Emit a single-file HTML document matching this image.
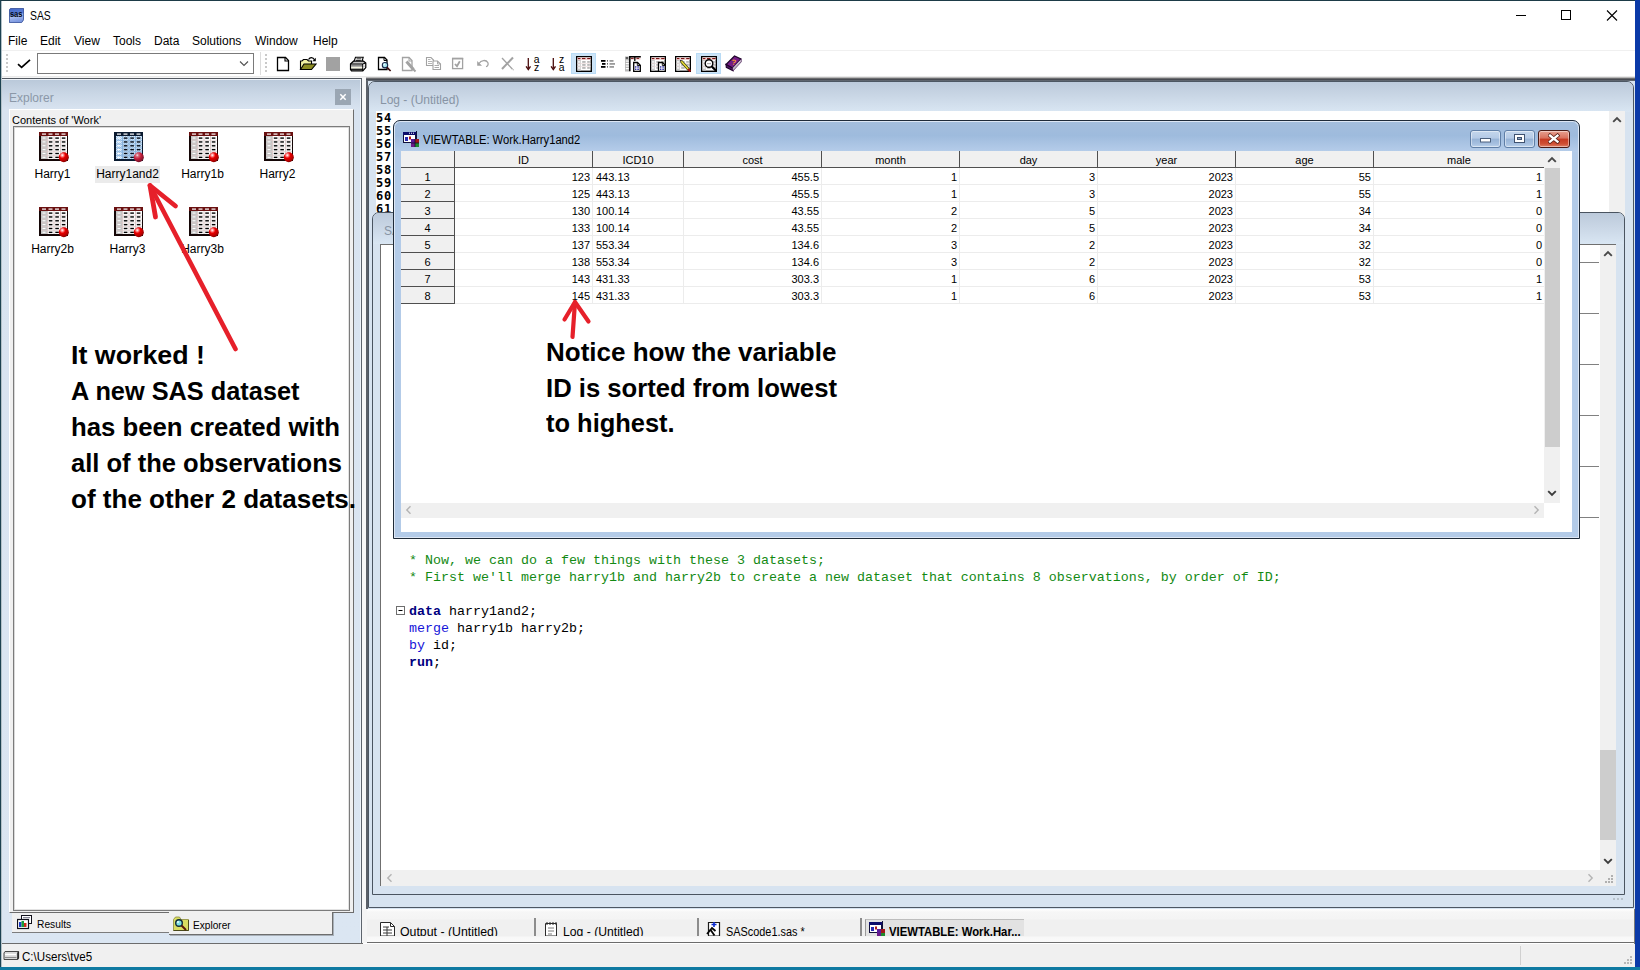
<!DOCTYPE html>
<html lang="en">
<head>
<meta charset="utf-8">
<title>SAS</title>
<style>
*{box-sizing:border-box;margin:0;padding:0}
html,body{width:1640px;height:970px;overflow:hidden;background:#fff}
body{position:relative;font-family:"Liberation Sans",sans-serif;font-size:12px;color:#000}
.abs{position:absolute}
.t{position:absolute;white-space:nowrap;line-height:14px}
/* outer frame */
#bTop{left:0;top:0;width:1640px;height:1px;background:#1d3b47}
#bLeft{left:0;top:0;width:1px;height:970px;background:#1d4251}
#bLeft2{left:1px;top:1px;width:1px;height:966px;background:#b4c2c9}
#bRight{left:1635px;top:0;width:5px;height:970px;background:#0b3aa8}
#bRightEdge{left:1634px;top:909px;width:1px;height:35px;background:#7a7a7a}
#bBottom{left:0;top:967px;width:1640px;height:3px;background:#0f7aa2}
/* title bar */
#title{left:1px;top:1px;width:1634px;height:30px;background:#fff}
/* menubar */
#menu{left:1px;top:31px;width:1634px;height:19px;background:#fff}
#menu .t{top:3px;font-size:12px}
/* toolbar */
#tb{left:1px;top:50px;width:1634px;height:27px;background:#fff;border-top:1px solid #f0f0f0}
#tbline{left:1px;top:76px;width:1634px;height:3px;background:linear-gradient(#e3e3e3,#f3f3f3 40%,#fafafa)}
#combo{left:37px;top:53px;width:217px;height:21px;border:1px solid #7a7a7a;background:#fff}
.grip{position:absolute;width:2px;top:54px;height:20px;background:repeating-linear-gradient(#c9c9c9 0 2px,transparent 2px 4px)}
/* explorer */
#exp{left:2px;top:78px;width:360px;height:865px;background:linear-gradient(#b9c8d9 0,#c9d6e5 14px,#d8e3f0 30px,#dbe6f2 100%);border-top:1px solid #535961;border-right:1px solid #5d646d;box-shadow:inset 0 1px 0 #eef3f9,inset -1px 0 0 #eef3f9}
#expHdr{left:9px;top:91px;font-size:12px;color:#8b98a8}
#expX{left:335px;top:89px;width:16px;height:16px;background:#9aa6b3}
#expPane{left:9px;top:109px;width:345px;height:804px;background:#f0f0f0;border-top:1px solid #fff;border-left:1px solid #fff;border-right:1px solid #6d6d6d;border-bottom:1px solid #6d6d6d}
#expList{left:13px;top:126px;width:337px;height:785px;background:#fff;border:1px solid #7b7b7b;box-shadow:inset 1px 1px 0 #d9d9d9,inset -1px -1px 0 #e3e3e3}
.ico{position:absolute;width:30px;height:30px}
.lbl{position:absolute;font-size:12px;line-height:14px;white-space:nowrap;text-align:center;width:90px}
.ann{position:absolute;white-space:nowrap;font-weight:bold;font-size:25.5px;line-height:30px;color:#000;transform-origin:0 0}
/* splitter + mdi */
#split{left:362px;top:78px;width:5px;height:865px;background:#f8f8f8}
#mdi{left:366px;top:78px;width:1269px;height:831px;background:#d7e3f0;border-left:2px solid #5c6169}
#mdiTop{left:366px;top:77px;width:1269px;height:4px;background:linear-gradient(#d8d8d8 0,#9a9a9a 25%,#3e4046 50%,#50555d 75%,#6d747e 100%)}
.cm{color:#138a13}.kw{color:#000080;font-weight:bold}.bl{color:#1414d8}
</style>
</head>
<body>
<!-- ===== title bar ===== -->
<div id="title" class="abs"></div>
<svg class="abs" style="left:9px;top:8px" width="15" height="15" viewBox="0 0 15 15">
  <defs><linearGradient id="sasg" x1="0" y1="0" x2="0.25" y2="1"><stop offset="0" stop-color="#4166c8"/><stop offset="0.5" stop-color="#5b7fd6"/><stop offset="0.62" stop-color="#a9bdee"/><stop offset="1" stop-color="#7c98e0"/></linearGradient></defs>
  <path d="M1.500 0.400H14.600V11.800L12.600 14.600H0.400V1.800Z" fill="url(#sasg)" stroke="#23408f" stroke-width="0.800"/>
  <text x="7.200" y="8.800" font-family="Liberation Sans,sans-serif" font-weight="bold" font-size="8.500" text-anchor="middle" fill="#03060f" textLength="12.600" lengthAdjust="spacingAndGlyphs">sas</text>
</svg>
<div class="t" style="left:30px;top:9px;font-size:12.5px;transform:scaleX(.83);transform-origin:0 0">SAS</div>
<svg class="abs" style="left:1500px;top:1px" width="135" height="30" viewBox="0 0 135 30" fill="none" stroke="#000" stroke-width="1">
  <path d="M16 14.5H26"/>
  <rect x="61.5" y="9.500" width="9" height="9"/>
  <path d="M107 9.500L117 19.500M117 9.500L107 19.500" stroke-width="1.1"/>
</svg>

<!-- ===== menu bar ===== -->
<div id="menu" class="abs">
  <div class="t" style="left:7px">File</div>
  <div class="t" style="left:39px">Edit</div>
  <div class="t" style="left:73px">View</div>
  <div class="t" style="left:112px">Tools</div>
  <div class="t" style="left:153px">Data</div>
  <div class="t" style="left:191px">Solutions</div>
  <div class="t" style="left:254px">Window</div>
  <div class="t" style="left:312px">Help</div>
</div>

<!-- ===== toolbar ===== -->
<div id="tb" class="abs"></div>
<div id="tbline" class="abs"></div>
<div class="grip" style="left:6px"></div>
<div class="grip" style="left:265px"></div>
<div class="abs" style="left:260px;top:52px;width:1px;height:23px;background:#dcdcdc"></div>
<svg class="abs" style="left:17px;top:58px" width="14" height="11" viewBox="0 0 14 11"><path d="M1 6.200L4.600 9.300L13 1.800" fill="none" stroke="#000" stroke-width="1.700"/></svg>
<div id="combo" class="abs"></div>
<svg class="abs" style="left:239px;top:60px" width="10" height="7" viewBox="0 0 10 7"><path d="M1 1.500L5 5.500L9 1.500" fill="none" stroke="#505050" stroke-width="1.100"/></svg>
<svg class="abs" style="left:276px;top:56px" width="14" height="16" viewBox="0 0 14 16"><path d="M1.500 1.500H9.500L12.500 4.500V14.500H1.500Z" fill="#fff" stroke="#000" stroke-width="1.300"/><path d="M9 1.500V5H12.500" fill="none" stroke="#000" stroke-width="1.100"/></svg>
<svg class="abs" style="left:299px;top:56px" width="18" height="16" viewBox="0 0 18 16"><path d="M9.500 3.500C11 1 14 1 15.500 3.800" fill="none" stroke="#000" stroke-width="1.200"/><path d="M16.800 1.800V5.200H13.400Z" fill="#000"/><path d="M1.500 13.500V5H3L4.500 3.500H8L9.500 5H12.500V8" fill="#f3f3a4" stroke="#000" stroke-width="1.100"/><path d="M1.500 13.500L5 8H17L12.500 13.500Z" fill="#8c8c22" stroke="#000" stroke-width="1.100"/></svg>
<svg class="abs" style="left:326px;top:57px" width="14" height="14" viewBox="0 0 14 14"><rect x="0" y="0" width="14" height="14" fill="#a2a2a2"/></svg>
<svg class="abs" style="left:349px;top:56px" width="18" height="16" viewBox="0 0 18 16"><path d="M5 5.500L6.500 1.300H14.200L13 5.500" fill="#fff" stroke="#000" stroke-width="1.100"/><path d="M7.500 2.800H12.300M7 4.400H11.800" stroke="#000" stroke-width="0.800"/><path d="M1.500 8L4.500 5.200H14.500L16.800 7V11.500L13.800 14.800H2.500L1.500 13.500Z" fill="#c8c8c8" stroke="#000" stroke-width="1.200"/><path d="M1.500 8H13.600L16.800 7M13.600 8V14.800" fill="none" stroke="#000" stroke-width="1"/><rect x="2.200" y="9" width="11" height="1.600" fill="#8a8a8a"/><rect x="2.200" y="10.800" width="11" height="1.700" fill="#f4f4e0"/><path d="M2 13.300H13.500" stroke="#000" stroke-width="1.100"/><circle cx="15.200" cy="9" r="0.700" fill="#fff"/><circle cx="15.200" cy="11.500" r="0.700" fill="#fff"/></svg>
<svg class="abs" style="left:377px;top:56px" width="16" height="17" viewBox="0 0 16 17"><path d="M1.500 1.500H7.500L10 4V13.500H1.500Z" fill="#fff" stroke="#000" stroke-width="1.300"/><path d="M7 1.500V4.500H10" fill="none" stroke="#000"/><circle cx="8" cy="9.200" r="2.700" fill="#a8e4ee" stroke="#1a2a4a" stroke-width="1.100"/><circle cx="7.300" cy="8.500" r="0.900" fill="#e8ffff"/><path d="M10 11.400L13.600 15" stroke="#3a0a0a" stroke-width="1.700"/></svg>
<svg class="abs" style="left:401px;top:56px" width="16" height="17" viewBox="0 0 16 17"><path d="M1.500 1.500H8L11 4.500V14.500H1.500Z" fill="#fff" stroke="#a2a2a2" stroke-width="1.300"/><path d="M8 1.500V5H11" fill="none" stroke="#a2a2a2"/><path d="M5.500 5.500L12.500 13.500" stroke="#a2a2a2" stroke-width="3"/><path d="M12 13L14.500 15.500" stroke="#a2a2a2" stroke-width="2"/></svg>
<svg class="abs" style="left:425px;top:56px" width="17" height="15" viewBox="0 0 17 15"><path d="M1.500 1.500H6L8.500 4V9.500H1.500Z" fill="#fff" stroke="#a2a2a2" stroke-width="1.100"/><path d="M3 3.500H5.500M3 5.500H7M3 7.500H7" stroke="#a2a2a2" stroke-width="0.800"/><path d="M8 5H12.500L15.500 8V13.500H8Z" fill="#fff" stroke="#a2a2a2" stroke-width="1.100"/><path d="M12.500 5V8H15.500" fill="none" stroke="#a2a2a2" stroke-width="0.900"/><path d="M9.500 9.500H14M9.500 11.500H14" stroke="#a2a2a2" stroke-width="0.900"/></svg>
<svg class="abs" style="left:451px;top:57px" width="13" height="13" viewBox="0 0 13 13"><rect x="1.600" y="1.600" width="10" height="10" fill="#fff" stroke="#a2a2a2" stroke-width="1.300"/><path d="M1 1.500H12.200" stroke="#a2a2a2" stroke-width="1.600"/><path d="M4 7L6 9.200L8.800 4.300" fill="none" stroke="#a2a2a2" stroke-width="1.800"/></svg>
<svg class="abs" style="left:476px;top:58px" width="14" height="10" viewBox="0 0 14 10"><path d="M3 5.500C5 2 10 1.500 11.800 4.500C12.800 6.500 11.500 8.300 10 8.600" fill="none" stroke="#a2a2a2" stroke-width="1.300"/><path d="M1.200 3V7.800H6Z" fill="#a2a2a2"/></svg>
<svg class="abs" style="left:500px;top:56px" width="15" height="15" viewBox="0 0 15 15"><path d="M2 2L12.500 13.200" stroke="#a2a2a2" stroke-width="1.300"/><path d="M13 1.500L2 13" stroke="#a2a2a2" stroke-width="2"/><rect x="12.800" y="13.300" width="1" height="1" fill="#a2a2a2"/></svg>
<svg class="abs" style="left:525px;top:56px" width="16" height="16" viewBox="0 0 16 16"><path d="M3.300 2V12.500" stroke="#4a0c0c" stroke-width="1.300"/><path d="M1.100 10.400L3.300 13.600L5.500 10.400" fill="none" stroke="#4a0c0c" stroke-width="1.400"/><text x="11.600" y="6.700" font-family="Liberation Sans,sans-serif" font-size="10.400" text-anchor="middle" fill="#000">a</text><text x="11.600" y="14.600" font-family="Liberation Sans,sans-serif" font-size="10.400" text-anchor="middle" fill="#000">z</text></svg>
<svg class="abs" style="left:550px;top:56px" width="16" height="16" viewBox="0 0 16 16"><path d="M3.300 2V12.500" stroke="#4a0c0c" stroke-width="1.300"/><path d="M1.100 10.400L3.300 13.600L5.500 10.400" fill="none" stroke="#4a0c0c" stroke-width="1.400"/><text x="11.600" y="6.700" font-family="Liberation Sans,sans-serif" font-size="10.400" text-anchor="middle" fill="#000">z</text><text x="11.600" y="14.600" font-family="Liberation Sans,sans-serif" font-size="10.400" text-anchor="middle" fill="#000">a</text></svg>
<div class="abs" style="left:571px;top:53px;width:25px;height:21px;background:#cce4f7;border:1px solid #b9dbf5"></div>
<svg class="abs" style="left:576px;top:56px" width="16" height="16" viewBox="0 0 16 16"><rect x="0.700" y="0.700" width="14.600" height="14.600" fill="#fff" stroke="#000" stroke-width="1.400"/><rect x="1.400" y="1.400" width="13.200" height="2.600" fill="#f2d6d6"/><rect x="1.400" y="4" width="3.400" height="10.600" fill="#c6c6c6"/><rect x="1.8" y="2" width="2.6" height="1.100" fill="#7a1414"/><rect x="6" y="2" width="3.4" height="1.100" fill="#7a1414"/><rect x="11.2" y="2" width="3.4" height="1.100" fill="#7a1414"/><rect x="2" y="5.3" width="2.200" height="1.300" fill="#fff"/><rect x="6.200" y="5.3" width="3.400" height="1.300" fill="#9a9a9a"/><rect x="11.200" y="5.3" width="2.600" height="1.300" fill="#9a9a9a"/><rect x="2" y="8.3" width="2.200" height="1.300" fill="#fff"/><rect x="6.200" y="8.3" width="3.400" height="1.300" fill="#9a9a9a"/><rect x="11.200" y="8.3" width="2.600" height="1.300" fill="#9a9a9a"/><rect x="2" y="11.3" width="2.200" height="1.300" fill="#fff"/><rect x="6.200" y="11.3" width="3.400" height="1.300" fill="#9a9a9a"/><rect x="11.200" y="11.3" width="2.600" height="1.300" fill="#9a9a9a"/><rect x="1.400" y="7.200" width="13.200" height="0.600" fill="#e8d8d8"/><rect x="1.400" y="10.200" width="13.200" height="0.600" fill="#e8d8d8"/></svg>
<svg class="abs" style="left:600px;top:59px" width="16" height="10" viewBox="0 0 16 10"><rect x="1" y="1" width="4.500" height="1.800" fill="#000"/><rect x="2" y="4" width="3.500" height="1.800" fill="#000"/><rect x="1" y="7" width="4.500" height="1.800" fill="#000"/><rect x="7" y="1.400" width="1" height="1" fill="#000"/><rect x="7" y="4.400" width="1" height="1" fill="#000"/><rect x="7" y="7.400" width="1" height="1" fill="#000"/><rect x="9.500" y="1" width="4" height="1.800" fill="#9a9a9a"/><rect x="9.500" y="4" width="5.500" height="1.800" fill="#9a9a9a"/><rect x="9.500" y="7" width="4.500" height="1.800" fill="#9a9a9a"/></svg>
<svg class="abs" style="left:625px;top:56px" width="17" height="16" viewBox="0 0 17 16"><rect x="0" y="0.500" width="4.500" height="15" fill="#b8b8b8"/><rect x="4.500" y="0.700" width="10.800" height="14.600" fill="#fff"/><rect x="4.500" y="0.500" width="11" height="3.200" fill="#f0d2d2"/><path d="M4.800 15.300V0.800H15.800" fill="none" stroke="#000" stroke-width="1.500"/><path d="M9.800 0.800V5" stroke="#000" stroke-width="1.300"/><rect x="0.800" y="1.500" width="2.200" height="1" fill="#000"/><rect x="6" y="1.900" width="2.600" height="1" fill="#7a1414"/><rect x="11.500" y="1.900" width="2.600" height="1" fill="#7a1414"/><rect x="0.800" y="4.5" width="3" height="1.200" fill="#fff"/><rect x="0.800" y="7" width="3" height="1.200" fill="#fff"/><rect x="0.800" y="9.5" width="3" height="1.200" fill="#fff"/><rect x="0.800" y="12" width="3" height="1.200" fill="#fff"/><path d="M8.700 6.500H12.500L15.300 9.300V15.300H8.700Z" fill="#fff" stroke="#000" stroke-width="1.300"/><path d="M12.300 6.500V9.500H15.300" fill="none" stroke="#000" stroke-width="0.900"/><rect x="10" y="10.300" width="1.400" height="1.300" fill="#1a1a9a"/><rect x="12.300" y="10.300" width="1.600" height="1.300" fill="#1a1a9a"/><rect x="10" y="12.600" width="1.400" height="1.300" fill="#1a1a9a"/><rect x="12.300" y="12.600" width="1.600" height="1.300" fill="#1a1a9a"/></svg>
<svg class="abs" style="left:650px;top:56px" width="17" height="16" viewBox="0 0 17 16"><rect x="0.700" y="0.700" width="14.600" height="14.600" fill="#fff" stroke="#000" stroke-width="1.400"/><rect x="1.400" y="1.400" width="13.200" height="2.600" fill="#f2d6d6"/><rect x="1.400" y="4" width="3.400" height="10.600" fill="#c6c6c6"/><rect x="1.8" y="2" width="2.6" height="1.100" fill="#7a1414"/><rect x="6" y="2" width="3.4" height="1.100" fill="#7a1414"/><rect x="11.2" y="2" width="3.4" height="1.100" fill="#7a1414"/><rect x="2" y="5.3" width="2.200" height="1.300" fill="#fff"/><rect x="6.200" y="5.3" width="3.400" height="1.300" fill="#9a9a9a"/><rect x="11.200" y="5.3" width="2.600" height="1.300" fill="#9a9a9a"/><rect x="2" y="8.3" width="2.200" height="1.300" fill="#fff"/><rect x="6.200" y="8.3" width="3.400" height="1.300" fill="#9a9a9a"/><rect x="11.200" y="8.3" width="2.600" height="1.300" fill="#9a9a9a"/><rect x="2" y="11.3" width="2.200" height="1.300" fill="#fff"/><rect x="6.200" y="11.3" width="3.400" height="1.300" fill="#9a9a9a"/><rect x="11.200" y="11.3" width="2.600" height="1.300" fill="#9a9a9a"/><rect x="1.400" y="7.200" width="13.200" height="0.600" fill="#e8d8d8"/><rect x="1.400" y="10.200" width="13.200" height="0.600" fill="#e8d8d8"/><path d="M8.500 6.500H12.500L15.300 9.300V15.300H8.500Z" fill="#fff" stroke="#000" stroke-width="1.300"/><path d="M12.300 6.500V9.500H15.300" fill="none" stroke="#000" stroke-width="0.900"/><rect x="10" y="10.300" width="1.400" height="1.300" fill="#1a1a9a"/><rect x="12.300" y="10.300" width="1.600" height="1.300" fill="#1a1a9a"/><rect x="10" y="12.600" width="1.400" height="1.300" fill="#1a1a9a"/><rect x="12.300" y="12.600" width="1.600" height="1.300" fill="#1a1a9a"/></svg>
<svg class="abs" style="left:675px;top:56px" width="17" height="16" viewBox="0 0 17 16"><rect x="0.700" y="0.700" width="14.600" height="14.600" fill="#fff" stroke="#000" stroke-width="1.400"/><rect x="1.400" y="1.400" width="13.200" height="2.600" fill="#f2d6d6"/><rect x="1.400" y="4" width="3.400" height="10.600" fill="#c6c6c6"/><rect x="1.8" y="2" width="2.6" height="1.100" fill="#7a1414"/><rect x="6" y="2" width="3.4" height="1.100" fill="#7a1414"/><rect x="11.2" y="2" width="3.4" height="1.100" fill="#7a1414"/><rect x="2" y="5.3" width="2.200" height="1.300" fill="#fff"/><rect x="6.200" y="5.3" width="3.400" height="1.300" fill="#9a9a9a"/><rect x="11.200" y="5.3" width="2.600" height="1.300" fill="#9a9a9a"/><rect x="2" y="8.3" width="2.200" height="1.300" fill="#fff"/><rect x="6.200" y="8.3" width="3.400" height="1.300" fill="#9a9a9a"/><rect x="11.200" y="8.3" width="2.600" height="1.300" fill="#9a9a9a"/><rect x="2" y="11.3" width="2.200" height="1.300" fill="#fff"/><rect x="6.200" y="11.3" width="3.400" height="1.300" fill="#9a9a9a"/><rect x="11.200" y="11.3" width="2.600" height="1.300" fill="#9a9a9a"/><rect x="1.400" y="7.200" width="13.200" height="0.600" fill="#e8d8d8"/><rect x="1.400" y="10.200" width="13.200" height="0.600" fill="#e8d8d8"/><path d="M6 5L14.500 14.500" stroke="#3a3a0a" stroke-width="2.800"/><path d="M6.300 5.300L13.600 13.500" stroke="#f0e43a" stroke-width="1.400"/><path d="M13 13L15.500 15.500" stroke="#a01414" stroke-width="2"/><path d="M4.800 3.800L6.800 4.600L5.600 5.800Z" fill="#000"/></svg>
<div class="abs" style="left:696px;top:53px;width:25px;height:21px;background:#cce4f7;border:1px solid #b9dbf5"></div>
<svg class="abs" style="left:701px;top:56px" width="17" height="16" viewBox="0 0 17 16"><rect x="0.700" y="0.700" width="14.600" height="14.600" fill="#fff" stroke="#000" stroke-width="1.400"/><rect x="1.400" y="1.400" width="13.200" height="2.600" fill="#f2d6d6"/><rect x="1.400" y="4" width="3.400" height="10.600" fill="#c6c6c6"/><rect x="1.8" y="2" width="2.6" height="1.100" fill="#7a1414"/><rect x="6" y="2" width="3.4" height="1.100" fill="#7a1414"/><rect x="11.2" y="2" width="3.4" height="1.100" fill="#7a1414"/><rect x="2" y="5.3" width="2.200" height="1.300" fill="#fff"/><rect x="6.200" y="5.3" width="3.400" height="1.300" fill="#9a9a9a"/><rect x="11.200" y="5.3" width="2.600" height="1.300" fill="#9a9a9a"/><rect x="2" y="8.3" width="2.200" height="1.300" fill="#fff"/><rect x="6.200" y="8.3" width="3.400" height="1.300" fill="#9a9a9a"/><rect x="11.200" y="8.3" width="2.600" height="1.300" fill="#9a9a9a"/><rect x="2" y="11.3" width="2.200" height="1.300" fill="#fff"/><rect x="6.200" y="11.3" width="3.400" height="1.300" fill="#9a9a9a"/><rect x="11.200" y="11.3" width="2.600" height="1.300" fill="#9a9a9a"/><rect x="1.400" y="7.200" width="13.200" height="0.600" fill="#e8d8d8"/><rect x="1.400" y="10.200" width="13.200" height="0.600" fill="#e8d8d8"/><circle cx="8" cy="7.500" r="3.800" fill="#fff" stroke="#000" stroke-width="1.400"/><rect x="6" y="7" width="4" height="1.200" fill="#b0b0b0"/><path d="M10.800 10.500L15.300 15" stroke="#000" stroke-width="2.200"/></svg>
<svg class="abs" style="left:725px;top:55px" width="17" height="17" viewBox="0 0 17 17"><path d="M1 9.500L9.500 1L16 4L7.500 13Z" fill="#741c86" stroke="#1e0428" stroke-width="1.100"/><path d="M1 9.500L1.300 12.300L8 15.800L7.500 13Z" fill="#521066" stroke="#1e0428" stroke-width="1.100"/><path d="M7.500 13L16 4L16.300 6.800L8 15.800Z" fill="#f4f0f4" stroke="#3a0a4a" stroke-width="0.800"/><path d="M8 14.200L16.200 5.300M8 15L16.200 6.200" stroke="#9a8aa0" stroke-width="0.500"/><text x="8.800" y="9.800" font-family="Liberation Sans,sans-serif" font-weight="bold" font-size="7.500" text-anchor="middle" fill="#ff9a2a" transform="rotate(8 8.800 7)">?</text></svg>


<!-- ===== explorer ===== -->
<div id="exp" class="abs"></div>
<div id="expHdr" class="t">Explorer</div>
<div id="expX" class="abs"></div>
<svg class="abs" style="left:339px;top:93px" width="8" height="8" viewBox="0 0 8 8"><path d="M1.300 1.300L6.700 6.700M6.700 1.300L1.300 6.700" stroke="#fff" stroke-width="1.500" fill="none"/></svg>
<div id="expPane" class="abs"></div>
<div class="t" style="left:12px;top:114px;font-size:11px;line-height:13px">Contents of 'Work'</div>
<div id="expList" class="abs"></div>
<svg class="abs" width="0" height="0"><defs><radialGradient id="ball" cx="0.35" cy="0.3" r="0.75"><stop offset="0" stop-color="#fff"/><stop offset="0.18" stop-color="#ff8a8a"/><stop offset="0.4" stop-color="#e80000"/><stop offset="0.8" stop-color="#b00000"/><stop offset="1" stop-color="#6a0000"/></radialGradient><radialGradient id="ballS" cx="0.35" cy="0.3" r="0.75"><stop offset="0" stop-color="#f4e4e8"/><stop offset="0.2" stop-color="#d86a7a"/><stop offset="0.5" stop-color="#c41e3a"/><stop offset="1" stop-color="#6a1028"/></radialGradient><pattern id="dith" width="2" height="2" patternUnits="userSpaceOnUse"><rect x="0" y="0" width="1" height="1" fill="#fff" fill-opacity="0.6"/><rect x="1" y="1" width="1" height="1" fill="#fff" fill-opacity="0.6"/></pattern></defs></svg>
<svg class="abs" style="left:39px;top:132px" width="31" height="31" viewBox="0 0 31 31"><rect x="0" y="0" width="29" height="29" fill="#140606"/><rect x="2" y="4" width="26" height="23" fill="#ffffff"/><rect x="0" y="0" width="29" height="4" fill="#6a1010"/><rect x="2" y="4" width="6" height="23" fill="#c4c4c4"/><rect x="8" y="4" width="1" height="23" fill="#dccaca"/><rect x="14.5" y="4" width="1" height="23" fill="#dccaca"/><rect x="21" y="4" width="1" height="23" fill="#dccaca"/><rect x="3" y="1.500" width="4" height="1.200" fill="#fff"/><rect x="9.5" y="1.500" width="4" height="1.200" fill="#fff"/><rect x="16" y="1.500" width="4" height="1.200" fill="#fff"/><rect x="22.5" y="1.500" width="4" height="1.200" fill="#fff"/><rect x="3.500" y="5.50" width="3" height="1.100" fill="#fff"/><rect x="9.8" y="5.40" width="3.600" height="1.400" fill="#000000"/><rect x="16.3" y="5.40" width="3.600" height="1.400" fill="#000000"/><rect x="22.8" y="5.40" width="3.600" height="1.400" fill="#000000"/><rect x="2" y="7.85" width="26" height="0.700" fill="#dccaca"/><rect x="3.500" y="9.35" width="3" height="1.100" fill="#fff"/><rect x="9.8" y="9.25" width="3.600" height="1.400" fill="#000000"/><rect x="16.3" y="9.25" width="3.600" height="1.400" fill="#000000"/><rect x="22.8" y="9.25" width="3.600" height="1.400" fill="#000000"/><rect x="2" y="11.70" width="26" height="0.700" fill="#dccaca"/><rect x="3.500" y="13.20" width="3" height="1.100" fill="#fff"/><rect x="9.8" y="13.10" width="3.600" height="1.400" fill="#000000"/><rect x="16.3" y="13.10" width="3.600" height="1.400" fill="#000000"/><rect x="22.8" y="13.10" width="3.600" height="1.400" fill="#000000"/><rect x="2" y="15.55" width="26" height="0.700" fill="#dccaca"/><rect x="3.500" y="17.05" width="3" height="1.100" fill="#fff"/><rect x="9.8" y="16.95" width="3.600" height="1.400" fill="#000000"/><rect x="16.3" y="16.95" width="3.600" height="1.400" fill="#000000"/><rect x="22.8" y="16.95" width="3.600" height="1.400" fill="#000000"/><rect x="2" y="19.40" width="26" height="0.700" fill="#dccaca"/><rect x="3.500" y="20.90" width="3" height="1.100" fill="#fff"/><rect x="9.8" y="20.80" width="3.600" height="1.400" fill="#000000"/><rect x="16.3" y="20.80" width="3.600" height="1.400" fill="#000000"/><rect x="22.8" y="20.80" width="3.600" height="1.400" fill="#000000"/><rect x="2" y="23.25" width="26" height="0.700" fill="#dccaca"/><rect x="3.500" y="24.75" width="3" height="1.100" fill="#fff"/><rect x="9.8" y="24.65" width="3.600" height="1.400" fill="#000000"/><rect x="16.3" y="24.65" width="3.600" height="1.400" fill="#000000"/><rect x="22.8" y="24.65" width="3.600" height="1.400" fill="#000000"/><circle cx="24.800" cy="25.200" r="5" fill="url(#ball)"/></svg>
<div class="lbl" style="left:7.5px;top:167px">Harry1</div>
<svg class="abs" style="left:114px;top:132px" width="31" height="31" viewBox="0 0 31 31"><rect x="0" y="0" width="29" height="29" fill="#0a1a30"/><rect x="2" y="4" width="26" height="23" fill="#a6caec"/><rect x="0" y="0" width="29" height="4" fill="#0a1a30"/><rect x="2" y="4" width="6" height="23" fill="#9cc4ea"/><rect x="2" y="4" width="26" height="23" fill="url(#dith)"/><rect x="8" y="4" width="1" height="23" fill="#8ab4de"/><rect x="14.5" y="4" width="1" height="23" fill="#8ab4de"/><rect x="21" y="4" width="1" height="23" fill="#8ab4de"/><rect x="3" y="1.500" width="4" height="1.200" fill="#fff"/><rect x="9.5" y="1.500" width="4" height="1.200" fill="#fff"/><rect x="16" y="1.500" width="4" height="1.200" fill="#fff"/><rect x="22.5" y="1.500" width="4" height="1.200" fill="#fff"/><rect x="3.500" y="5.50" width="3" height="1.100" fill="#fff"/><rect x="9.8" y="5.40" width="3.600" height="1.400" fill="#050c18"/><rect x="16.3" y="5.40" width="3.600" height="1.400" fill="#050c18"/><rect x="22.8" y="5.40" width="3.600" height="1.400" fill="#050c18"/><rect x="2" y="7.85" width="26" height="0.700" fill="#8ab4de"/><rect x="3.500" y="9.35" width="3" height="1.100" fill="#fff"/><rect x="9.8" y="9.25" width="3.600" height="1.400" fill="#050c18"/><rect x="16.3" y="9.25" width="3.600" height="1.400" fill="#050c18"/><rect x="22.8" y="9.25" width="3.600" height="1.400" fill="#050c18"/><rect x="2" y="11.70" width="26" height="0.700" fill="#8ab4de"/><rect x="3.500" y="13.20" width="3" height="1.100" fill="#fff"/><rect x="9.8" y="13.10" width="3.600" height="1.400" fill="#050c18"/><rect x="16.3" y="13.10" width="3.600" height="1.400" fill="#050c18"/><rect x="22.8" y="13.10" width="3.600" height="1.400" fill="#050c18"/><rect x="2" y="15.55" width="26" height="0.700" fill="#8ab4de"/><rect x="3.500" y="17.05" width="3" height="1.100" fill="#fff"/><rect x="9.8" y="16.95" width="3.600" height="1.400" fill="#050c18"/><rect x="16.3" y="16.95" width="3.600" height="1.400" fill="#050c18"/><rect x="22.8" y="16.95" width="3.600" height="1.400" fill="#050c18"/><rect x="2" y="19.40" width="26" height="0.700" fill="#8ab4de"/><rect x="3.500" y="20.90" width="3" height="1.100" fill="#fff"/><rect x="9.8" y="20.80" width="3.600" height="1.400" fill="#050c18"/><rect x="16.3" y="20.80" width="3.600" height="1.400" fill="#050c18"/><rect x="22.8" y="20.80" width="3.600" height="1.400" fill="#050c18"/><rect x="2" y="23.25" width="26" height="0.700" fill="#8ab4de"/><rect x="3.500" y="24.75" width="3" height="1.100" fill="#fff"/><rect x="9.8" y="24.65" width="3.600" height="1.400" fill="#050c18"/><rect x="16.3" y="24.65" width="3.600" height="1.400" fill="#050c18"/><rect x="22.8" y="24.65" width="3.600" height="1.400" fill="#050c18"/><circle cx="24.800" cy="25.200" r="5" fill="url(#ballS)"/></svg>
<div class="abs" style="left:95px;top:166px;width:65px;height:17px;background:#ebebeb"></div>
<div class="lbl" style="left:82.5px;top:167px">Harry1and2</div>
<svg class="abs" style="left:189px;top:132px" width="31" height="31" viewBox="0 0 31 31"><rect x="0" y="0" width="29" height="29" fill="#140606"/><rect x="2" y="4" width="26" height="23" fill="#ffffff"/><rect x="0" y="0" width="29" height="4" fill="#6a1010"/><rect x="2" y="4" width="6" height="23" fill="#c4c4c4"/><rect x="8" y="4" width="1" height="23" fill="#dccaca"/><rect x="14.5" y="4" width="1" height="23" fill="#dccaca"/><rect x="21" y="4" width="1" height="23" fill="#dccaca"/><rect x="3" y="1.500" width="4" height="1.200" fill="#fff"/><rect x="9.5" y="1.500" width="4" height="1.200" fill="#fff"/><rect x="16" y="1.500" width="4" height="1.200" fill="#fff"/><rect x="22.5" y="1.500" width="4" height="1.200" fill="#fff"/><rect x="3.500" y="5.50" width="3" height="1.100" fill="#fff"/><rect x="9.8" y="5.40" width="3.600" height="1.400" fill="#000000"/><rect x="16.3" y="5.40" width="3.600" height="1.400" fill="#000000"/><rect x="22.8" y="5.40" width="3.600" height="1.400" fill="#000000"/><rect x="2" y="7.85" width="26" height="0.700" fill="#dccaca"/><rect x="3.500" y="9.35" width="3" height="1.100" fill="#fff"/><rect x="9.8" y="9.25" width="3.600" height="1.400" fill="#000000"/><rect x="16.3" y="9.25" width="3.600" height="1.400" fill="#000000"/><rect x="22.8" y="9.25" width="3.600" height="1.400" fill="#000000"/><rect x="2" y="11.70" width="26" height="0.700" fill="#dccaca"/><rect x="3.500" y="13.20" width="3" height="1.100" fill="#fff"/><rect x="9.8" y="13.10" width="3.600" height="1.400" fill="#000000"/><rect x="16.3" y="13.10" width="3.600" height="1.400" fill="#000000"/><rect x="22.8" y="13.10" width="3.600" height="1.400" fill="#000000"/><rect x="2" y="15.55" width="26" height="0.700" fill="#dccaca"/><rect x="3.500" y="17.05" width="3" height="1.100" fill="#fff"/><rect x="9.8" y="16.95" width="3.600" height="1.400" fill="#000000"/><rect x="16.3" y="16.95" width="3.600" height="1.400" fill="#000000"/><rect x="22.8" y="16.95" width="3.600" height="1.400" fill="#000000"/><rect x="2" y="19.40" width="26" height="0.700" fill="#dccaca"/><rect x="3.500" y="20.90" width="3" height="1.100" fill="#fff"/><rect x="9.8" y="20.80" width="3.600" height="1.400" fill="#000000"/><rect x="16.3" y="20.80" width="3.600" height="1.400" fill="#000000"/><rect x="22.8" y="20.80" width="3.600" height="1.400" fill="#000000"/><rect x="2" y="23.25" width="26" height="0.700" fill="#dccaca"/><rect x="3.500" y="24.75" width="3" height="1.100" fill="#fff"/><rect x="9.8" y="24.65" width="3.600" height="1.400" fill="#000000"/><rect x="16.3" y="24.65" width="3.600" height="1.400" fill="#000000"/><rect x="22.8" y="24.65" width="3.600" height="1.400" fill="#000000"/><circle cx="24.800" cy="25.200" r="5" fill="url(#ball)"/></svg>
<div class="lbl" style="left:157.5px;top:167px">Harry1b</div>
<svg class="abs" style="left:264px;top:132px" width="31" height="31" viewBox="0 0 31 31"><rect x="0" y="0" width="29" height="29" fill="#140606"/><rect x="2" y="4" width="26" height="23" fill="#ffffff"/><rect x="0" y="0" width="29" height="4" fill="#6a1010"/><rect x="2" y="4" width="6" height="23" fill="#c4c4c4"/><rect x="8" y="4" width="1" height="23" fill="#dccaca"/><rect x="14.5" y="4" width="1" height="23" fill="#dccaca"/><rect x="21" y="4" width="1" height="23" fill="#dccaca"/><rect x="3" y="1.500" width="4" height="1.200" fill="#fff"/><rect x="9.5" y="1.500" width="4" height="1.200" fill="#fff"/><rect x="16" y="1.500" width="4" height="1.200" fill="#fff"/><rect x="22.5" y="1.500" width="4" height="1.200" fill="#fff"/><rect x="3.500" y="5.50" width="3" height="1.100" fill="#fff"/><rect x="9.8" y="5.40" width="3.600" height="1.400" fill="#000000"/><rect x="16.3" y="5.40" width="3.600" height="1.400" fill="#000000"/><rect x="22.8" y="5.40" width="3.600" height="1.400" fill="#000000"/><rect x="2" y="7.85" width="26" height="0.700" fill="#dccaca"/><rect x="3.500" y="9.35" width="3" height="1.100" fill="#fff"/><rect x="9.8" y="9.25" width="3.600" height="1.400" fill="#000000"/><rect x="16.3" y="9.25" width="3.600" height="1.400" fill="#000000"/><rect x="22.8" y="9.25" width="3.600" height="1.400" fill="#000000"/><rect x="2" y="11.70" width="26" height="0.700" fill="#dccaca"/><rect x="3.500" y="13.20" width="3" height="1.100" fill="#fff"/><rect x="9.8" y="13.10" width="3.600" height="1.400" fill="#000000"/><rect x="16.3" y="13.10" width="3.600" height="1.400" fill="#000000"/><rect x="22.8" y="13.10" width="3.600" height="1.400" fill="#000000"/><rect x="2" y="15.55" width="26" height="0.700" fill="#dccaca"/><rect x="3.500" y="17.05" width="3" height="1.100" fill="#fff"/><rect x="9.8" y="16.95" width="3.600" height="1.400" fill="#000000"/><rect x="16.3" y="16.95" width="3.600" height="1.400" fill="#000000"/><rect x="22.8" y="16.95" width="3.600" height="1.400" fill="#000000"/><rect x="2" y="19.40" width="26" height="0.700" fill="#dccaca"/><rect x="3.500" y="20.90" width="3" height="1.100" fill="#fff"/><rect x="9.8" y="20.80" width="3.600" height="1.400" fill="#000000"/><rect x="16.3" y="20.80" width="3.600" height="1.400" fill="#000000"/><rect x="22.8" y="20.80" width="3.600" height="1.400" fill="#000000"/><rect x="2" y="23.25" width="26" height="0.700" fill="#dccaca"/><rect x="3.500" y="24.75" width="3" height="1.100" fill="#fff"/><rect x="9.8" y="24.65" width="3.600" height="1.400" fill="#000000"/><rect x="16.3" y="24.65" width="3.600" height="1.400" fill="#000000"/><rect x="22.8" y="24.65" width="3.600" height="1.400" fill="#000000"/><circle cx="24.800" cy="25.200" r="5" fill="url(#ball)"/></svg>
<div class="lbl" style="left:232.5px;top:167px">Harry2</div>
<svg class="abs" style="left:39px;top:207px" width="31" height="31" viewBox="0 0 31 31"><rect x="0" y="0" width="29" height="29" fill="#140606"/><rect x="2" y="4" width="26" height="23" fill="#ffffff"/><rect x="0" y="0" width="29" height="4" fill="#6a1010"/><rect x="2" y="4" width="6" height="23" fill="#c4c4c4"/><rect x="8" y="4" width="1" height="23" fill="#dccaca"/><rect x="14.5" y="4" width="1" height="23" fill="#dccaca"/><rect x="21" y="4" width="1" height="23" fill="#dccaca"/><rect x="3" y="1.500" width="4" height="1.200" fill="#fff"/><rect x="9.5" y="1.500" width="4" height="1.200" fill="#fff"/><rect x="16" y="1.500" width="4" height="1.200" fill="#fff"/><rect x="22.5" y="1.500" width="4" height="1.200" fill="#fff"/><rect x="3.500" y="5.50" width="3" height="1.100" fill="#fff"/><rect x="9.8" y="5.40" width="3.600" height="1.400" fill="#000000"/><rect x="16.3" y="5.40" width="3.600" height="1.400" fill="#000000"/><rect x="22.8" y="5.40" width="3.600" height="1.400" fill="#000000"/><rect x="2" y="7.85" width="26" height="0.700" fill="#dccaca"/><rect x="3.500" y="9.35" width="3" height="1.100" fill="#fff"/><rect x="9.8" y="9.25" width="3.600" height="1.400" fill="#000000"/><rect x="16.3" y="9.25" width="3.600" height="1.400" fill="#000000"/><rect x="22.8" y="9.25" width="3.600" height="1.400" fill="#000000"/><rect x="2" y="11.70" width="26" height="0.700" fill="#dccaca"/><rect x="3.500" y="13.20" width="3" height="1.100" fill="#fff"/><rect x="9.8" y="13.10" width="3.600" height="1.400" fill="#000000"/><rect x="16.3" y="13.10" width="3.600" height="1.400" fill="#000000"/><rect x="22.8" y="13.10" width="3.600" height="1.400" fill="#000000"/><rect x="2" y="15.55" width="26" height="0.700" fill="#dccaca"/><rect x="3.500" y="17.05" width="3" height="1.100" fill="#fff"/><rect x="9.8" y="16.95" width="3.600" height="1.400" fill="#000000"/><rect x="16.3" y="16.95" width="3.600" height="1.400" fill="#000000"/><rect x="22.8" y="16.95" width="3.600" height="1.400" fill="#000000"/><rect x="2" y="19.40" width="26" height="0.700" fill="#dccaca"/><rect x="3.500" y="20.90" width="3" height="1.100" fill="#fff"/><rect x="9.8" y="20.80" width="3.600" height="1.400" fill="#000000"/><rect x="16.3" y="20.80" width="3.600" height="1.400" fill="#000000"/><rect x="22.8" y="20.80" width="3.600" height="1.400" fill="#000000"/><rect x="2" y="23.25" width="26" height="0.700" fill="#dccaca"/><rect x="3.500" y="24.75" width="3" height="1.100" fill="#fff"/><rect x="9.8" y="24.65" width="3.600" height="1.400" fill="#000000"/><rect x="16.3" y="24.65" width="3.600" height="1.400" fill="#000000"/><rect x="22.8" y="24.65" width="3.600" height="1.400" fill="#000000"/><circle cx="24.800" cy="25.200" r="5" fill="url(#ball)"/></svg>
<div class="lbl" style="left:7.5px;top:242px">Harry2b</div>
<svg class="abs" style="left:114px;top:207px" width="31" height="31" viewBox="0 0 31 31"><rect x="0" y="0" width="29" height="29" fill="#140606"/><rect x="2" y="4" width="26" height="23" fill="#ffffff"/><rect x="0" y="0" width="29" height="4" fill="#6a1010"/><rect x="2" y="4" width="6" height="23" fill="#c4c4c4"/><rect x="8" y="4" width="1" height="23" fill="#dccaca"/><rect x="14.5" y="4" width="1" height="23" fill="#dccaca"/><rect x="21" y="4" width="1" height="23" fill="#dccaca"/><rect x="3" y="1.500" width="4" height="1.200" fill="#fff"/><rect x="9.5" y="1.500" width="4" height="1.200" fill="#fff"/><rect x="16" y="1.500" width="4" height="1.200" fill="#fff"/><rect x="22.5" y="1.500" width="4" height="1.200" fill="#fff"/><rect x="3.500" y="5.50" width="3" height="1.100" fill="#fff"/><rect x="9.8" y="5.40" width="3.600" height="1.400" fill="#000000"/><rect x="16.3" y="5.40" width="3.600" height="1.400" fill="#000000"/><rect x="22.8" y="5.40" width="3.600" height="1.400" fill="#000000"/><rect x="2" y="7.85" width="26" height="0.700" fill="#dccaca"/><rect x="3.500" y="9.35" width="3" height="1.100" fill="#fff"/><rect x="9.8" y="9.25" width="3.600" height="1.400" fill="#000000"/><rect x="16.3" y="9.25" width="3.600" height="1.400" fill="#000000"/><rect x="22.8" y="9.25" width="3.600" height="1.400" fill="#000000"/><rect x="2" y="11.70" width="26" height="0.700" fill="#dccaca"/><rect x="3.500" y="13.20" width="3" height="1.100" fill="#fff"/><rect x="9.8" y="13.10" width="3.600" height="1.400" fill="#000000"/><rect x="16.3" y="13.10" width="3.600" height="1.400" fill="#000000"/><rect x="22.8" y="13.10" width="3.600" height="1.400" fill="#000000"/><rect x="2" y="15.55" width="26" height="0.700" fill="#dccaca"/><rect x="3.500" y="17.05" width="3" height="1.100" fill="#fff"/><rect x="9.8" y="16.95" width="3.600" height="1.400" fill="#000000"/><rect x="16.3" y="16.95" width="3.600" height="1.400" fill="#000000"/><rect x="22.8" y="16.95" width="3.600" height="1.400" fill="#000000"/><rect x="2" y="19.40" width="26" height="0.700" fill="#dccaca"/><rect x="3.500" y="20.90" width="3" height="1.100" fill="#fff"/><rect x="9.8" y="20.80" width="3.600" height="1.400" fill="#000000"/><rect x="16.3" y="20.80" width="3.600" height="1.400" fill="#000000"/><rect x="22.8" y="20.80" width="3.600" height="1.400" fill="#000000"/><rect x="2" y="23.25" width="26" height="0.700" fill="#dccaca"/><rect x="3.500" y="24.75" width="3" height="1.100" fill="#fff"/><rect x="9.8" y="24.65" width="3.600" height="1.400" fill="#000000"/><rect x="16.3" y="24.65" width="3.600" height="1.400" fill="#000000"/><rect x="22.8" y="24.65" width="3.600" height="1.400" fill="#000000"/><circle cx="24.800" cy="25.200" r="5" fill="url(#ball)"/></svg>
<div class="lbl" style="left:82.5px;top:242px">Harry3</div>
<svg class="abs" style="left:189px;top:207px" width="31" height="31" viewBox="0 0 31 31"><rect x="0" y="0" width="29" height="29" fill="#140606"/><rect x="2" y="4" width="26" height="23" fill="#ffffff"/><rect x="0" y="0" width="29" height="4" fill="#6a1010"/><rect x="2" y="4" width="6" height="23" fill="#c4c4c4"/><rect x="8" y="4" width="1" height="23" fill="#dccaca"/><rect x="14.5" y="4" width="1" height="23" fill="#dccaca"/><rect x="21" y="4" width="1" height="23" fill="#dccaca"/><rect x="3" y="1.500" width="4" height="1.200" fill="#fff"/><rect x="9.5" y="1.500" width="4" height="1.200" fill="#fff"/><rect x="16" y="1.500" width="4" height="1.200" fill="#fff"/><rect x="22.5" y="1.500" width="4" height="1.200" fill="#fff"/><rect x="3.500" y="5.50" width="3" height="1.100" fill="#fff"/><rect x="9.8" y="5.40" width="3.600" height="1.400" fill="#000000"/><rect x="16.3" y="5.40" width="3.600" height="1.400" fill="#000000"/><rect x="22.8" y="5.40" width="3.600" height="1.400" fill="#000000"/><rect x="2" y="7.85" width="26" height="0.700" fill="#dccaca"/><rect x="3.500" y="9.35" width="3" height="1.100" fill="#fff"/><rect x="9.8" y="9.25" width="3.600" height="1.400" fill="#000000"/><rect x="16.3" y="9.25" width="3.600" height="1.400" fill="#000000"/><rect x="22.8" y="9.25" width="3.600" height="1.400" fill="#000000"/><rect x="2" y="11.70" width="26" height="0.700" fill="#dccaca"/><rect x="3.500" y="13.20" width="3" height="1.100" fill="#fff"/><rect x="9.8" y="13.10" width="3.600" height="1.400" fill="#000000"/><rect x="16.3" y="13.10" width="3.600" height="1.400" fill="#000000"/><rect x="22.8" y="13.10" width="3.600" height="1.400" fill="#000000"/><rect x="2" y="15.55" width="26" height="0.700" fill="#dccaca"/><rect x="3.500" y="17.05" width="3" height="1.100" fill="#fff"/><rect x="9.8" y="16.95" width="3.600" height="1.400" fill="#000000"/><rect x="16.3" y="16.95" width="3.600" height="1.400" fill="#000000"/><rect x="22.8" y="16.95" width="3.600" height="1.400" fill="#000000"/><rect x="2" y="19.40" width="26" height="0.700" fill="#dccaca"/><rect x="3.500" y="20.90" width="3" height="1.100" fill="#fff"/><rect x="9.8" y="20.80" width="3.600" height="1.400" fill="#000000"/><rect x="16.3" y="20.80" width="3.600" height="1.400" fill="#000000"/><rect x="22.8" y="20.80" width="3.600" height="1.400" fill="#000000"/><rect x="2" y="23.25" width="26" height="0.700" fill="#dccaca"/><rect x="3.500" y="24.75" width="3" height="1.100" fill="#fff"/><rect x="9.8" y="24.65" width="3.600" height="1.400" fill="#000000"/><rect x="16.3" y="24.65" width="3.600" height="1.400" fill="#000000"/><rect x="22.8" y="24.65" width="3.600" height="1.400" fill="#000000"/><circle cx="24.800" cy="25.200" r="5" fill="url(#ball)"/></svg>
<div class="lbl" style="left:157.5px;top:242px">Harry3b</div>


<!-- ===== splitter + MDI ===== -->
<div id="split" class="abs"></div>
<div id="mdi" class="abs"></div>
<div id="mdiTop" class="abs"></div>
<!-- Log window -->
<div class="abs" style="left:368px;top:81px;width:1266px;height:827px;background:#d7e3f0;border:1px solid #4d5763;border-radius:7px 7px 0 0;overflow:hidden">
  <div class="abs" style="left:0;top:0;width:1266px;height:30px;background:linear-gradient(#bccadb,#c9d6e5 45%,#d9e6f3)"></div>
</div>
<div class="t" style="left:380px;top:93px;font-size:12px;color:#8794a4">Log - (Untitled)</div>
<div class="abs" style="left:376px;top:111px;width:1249px;height:110px;background:#fff"></div>
<div class="abs" id="logtxt" style="left:376px;top:112px;font-family:'DejaVu Sans Mono','Liberation Mono',monospace;font-weight:bold;font-size:12px;line-height:13px;letter-spacing:.7px;white-space:pre;height:102px;overflow:hidden">54
55
56
57
58
59
60
61
62</div>
<!-- log scrollbar -->
<div class="abs" style="left:1609px;top:111px;width:16px;height:110px;background:#f0f0f0"></div>
<svg class="abs" style="left:1612px;top:116px" width="10" height="7" viewBox="0 0 10 7"><path d="M1.200 5.800L5 2L8.800 5.800" fill="none" stroke="#484848" stroke-width="1.900"/></svg>

<!-- SAScode window -->
<div class="abs" style="left:372px;top:212px;width:1253px;height:683px;background:#d7e3f0;border:1px solid #4a5460;border-radius:7px 7px 0 0;overflow:hidden">
  <div class="abs" style="left:0;top:0;width:1253px;height:31px;background:linear-gradient(#bccadb,#c9d6e5 45%,#d9e6f3)"></div>
</div>
<div class="t" style="left:384px;top:224px;font-size:12px;color:#8794a4">SAScode1.sas *</div>
<div class="abs" style="left:380px;top:244px;width:1236px;height:642px;background:#fff;border-top:1px solid #6f6f6f;border-left:1px solid #6f6f6f"></div>
<!-- step separator lines -->
<div class="abs" style="left:409px;top:262px;width:1190px;height:1px;background:#808080"></div>
<div class="abs" style="left:409px;top:313px;width:1190px;height:1px;background:#808080"></div>
<div class="abs" style="left:409px;top:364px;width:1190px;height:1px;background:#808080"></div>
<div class="abs" style="left:409px;top:415px;width:1190px;height:1px;background:#808080"></div>
<div class="abs" style="left:409px;top:466px;width:1190px;height:1px;background:#808080"></div>
<div class="abs" style="left:409px;top:517px;width:1190px;height:1px;background:#808080"></div>
<!-- code -->
<div class="abs" id="code" style="left:409px;top:552px;font-family:'Liberation Mono',monospace;font-size:13.33px;line-height:17px;white-space:pre;color:#000"><span class="cm">* Now, we can do a few things with these 3 datasets;</span>
<span class="cm">* First we'll merge harry1b and harry2b to create a new dataset that contains 8 observations, by order of ID;</span>

<span class="kw">data</span> harry1and2;
<span class="bl">merge</span> harry1b harry2b;
<span class="bl">by</span> id;
<span class="kw">run</span>;</div>
<svg class="abs" style="left:396px;top:606px" width="10" height="10" viewBox="0 0 10 10"><rect x="0.500" y="0.500" width="8" height="8" fill="#fff" stroke="#6e6e6e"/><path d="M2.500 4.500H6.500" stroke="#000"/></svg>
<!-- SAScode scrollbars -->
<div class="abs" style="left:1600px;top:245px;width:16px;height:625px;background:#f0f0f0"></div>
<div class="abs" style="left:1600px;top:750px;width:16px;height:90px;background:#cdcdcd"></div>
<svg class="abs" style="left:1603px;top:250px" width="10" height="7" viewBox="0 0 10 7"><path d="M1.200 5.800L5 2L8.800 5.800" fill="none" stroke="#484848" stroke-width="1.900"/></svg>
<svg class="abs" style="left:1603px;top:858px" width="10" height="7" viewBox="0 0 10 7"><path d="M1.200 1.200L5 5L8.800 1.200" fill="none" stroke="#3c3c3c" stroke-width="1.900"/></svg>
<div class="abs" style="left:381px;top:870px;width:1235px;height:16px;background:#f0f0f0"></div>
<svg class="abs" style="left:386px;top:873px" width="7" height="10" viewBox="0 0 7 10"><path d="M5.500 1.200L1.800 5L5.500 8.800" fill="none" stroke="#b4b4b4" stroke-width="1.400"/></svg>
<svg class="abs" style="left:1587px;top:873px" width="7" height="10" viewBox="0 0 7 10"><path d="M1.500 1.200L5.200 5L1.500 8.800" fill="none" stroke="#b4b4b4" stroke-width="1.400"/></svg>
<svg class="abs" style="left:1604px;top:874px" width="10" height="10" viewBox="0 0 10 10" fill="#b0b0b0"><rect x="7" y="1" width="2" height="2"/><rect x="4" y="4" width="2" height="2"/><rect x="7" y="4" width="2" height="2"/><rect x="1" y="7" width="2" height="2"/><rect x="4" y="7" width="2" height="2"/><rect x="7" y="7" width="2" height="2"/></svg>
<svg class="abs" style="left:1613px;top:898px" width="12" height="3" viewBox="0 0 12 3" fill="#b8c2cc"><rect x="0" y="0" width="2" height="2"/><rect x="4" y="0" width="2" height="2"/><rect x="8" y="0" width="2" height="2"/></svg>
<!-- VIEWTABLE window -->
<div class="abs" id="vt" style="left:393px;top:120px;width:1187px;height:419px;background:#b3cbe8;border:1px solid #1f2b39;border-radius:7px 7px 0 0;overflow:hidden;box-shadow:inset 0 0 0 1px rgba(255,255,255,.55)">
<div class="abs" style="left:1px;top:1px;width:1183px;height:30px;border-radius:6px 6px 0 0;background:linear-gradient(#a4bedd,#9ebbdd 45%,#b6cdea)"></div>
<div class="abs" style="left:7px;top:30px;width:1171px;height:381px;background:#fff"></div>
</div>
<svg class="abs" style="left:403px;top:131px" width="17" height="17" viewBox="0 0 17 17"><rect x="0.500" y="1.500" width="12" height="10" fill="#fff" stroke="#10103a"/><rect x="0" y="1" width="13" height="3" fill="#0c0c6a"/><rect x="6" y="1.700" width="1" height="1" fill="#fff"/><rect x="8" y="1.700" width="1" height="1" fill="#fff"/><rect x="10" y="1.700" width="1" height="1" fill="#fff"/><rect x="2" y="6" width="3" height="4" fill="#2a2ab0"/><rect x="6" y="5.500" width="2" height="3" fill="#b01818"/><rect x="13" y="0" width="1" height="9" fill="#10103a"/><rect x="8" y="8" width="4" height="4" fill="#5a1a9a"/><rect x="12" y="8" width="4" height="4" fill="#a01818"/><rect x="8" y="12" width="4" height="4" fill="#6a1a8a"/><rect x="12" y="12" width="4" height="4" fill="#1e8a2e"/><path d="M8 12H16M12 8V16" stroke="#10102a" stroke-width="0.800"/></svg>
<div class="t" id="vttitle" style="left:423px;top:133px;font-size:12px;color:#000;transform:scaleX(.935);transform-origin:0 0">VIEWTABLE: Work.Harry1and2</div>
<div class="abs" style="left:1470px;top:130px;width:31px;height:18px;border:1px solid #5f7ea6;border-radius:3px;background:linear-gradient(#c4d6ec 0,#b4cae6 45%,#97b3d6 50%,#a6c0e0 80%,#bcd2ec 100%);box-shadow:inset 0 0 0 1px rgba(255,255,255,.45)"></div>
<div class="abs" style="left:1504px;top:130px;width:31px;height:18px;border:1px solid #5f7ea6;border-radius:3px;background:linear-gradient(#c4d6ec 0,#b4cae6 45%,#97b3d6 50%,#a6c0e0 80%,#bcd2ec 100%);box-shadow:inset 0 0 0 1px rgba(255,255,255,.45)"></div>
<div class="abs" style="left:1538px;top:130px;width:32px;height:18px;border:1px solid #4a1a14;border-radius:3px;background:linear-gradient(#e6a090 0,#d9705c 45%,#c63a22 50%,#cf4f33 80%,#de8067 100%);box-shadow:inset 0 0 0 1px rgba(255,255,255,.45)"></div>
<svg class="abs" style="left:1480px;top:138px" width="12" height="6" viewBox="0 0 12 6"><rect x="0.500" y="0.500" width="10" height="3.500" fill="#fff" stroke="#4a5f7c"/></svg>
<svg class="abs" style="left:1514px;top:134px" width="12" height="10" viewBox="0 0 12 10"><rect x="0.500" y="0.500" width="10" height="8" fill="#fff" stroke="#3f5270"/><rect x="3.500" y="3.500" width="4" height="2" fill="#8fa6c4" stroke="#3f5270"/></svg>
<svg class="abs" style="left:1548px;top:133px" width="12" height="11" viewBox="0 0 12 11"><path d="M2 2.500L9.500 8.700M9.500 2.500L2 8.700" stroke="#5a2018" stroke-width="3.800" stroke-linecap="square"/><path d="M2 2.500L9.500 8.700M9.500 2.500L2 8.700" stroke="#fff" stroke-width="2.300" stroke-linecap="square"/></svg>
<div class="abs" id="grid" style="left:401px;top:151px;width:1143px;height:352px;font-size:11px;line-height:13px;overflow:hidden">
<div class="abs" style="left:0;top:0;width:1143px;height:17px;background:#f0f0f0;border-bottom:1px solid #4f4f4f"></div>
<div class="abs" style="left:0;top:0;width:54px;height:17px;border-right:1px solid #4f4f4f"></div>
<div class="abs" style="left:54px;top:0;width:138px;height:17px;border-right:1px solid #4f4f4f;text-align:center;padding-top:3px">ID</div>
<div class="abs" style="left:192px;top:0;width:91px;height:17px;border-right:1px solid #4f4f4f;text-align:center;padding-top:3px">ICD10</div>
<div class="abs" style="left:283px;top:0;width:138px;height:17px;border-right:1px solid #4f4f4f;text-align:center;padding-top:3px">cost</div>
<div class="abs" style="left:421px;top:0;width:138px;height:17px;border-right:1px solid #4f4f4f;text-align:center;padding-top:3px">month</div>
<div class="abs" style="left:559px;top:0;width:138px;height:17px;border-right:1px solid #4f4f4f;text-align:center;padding-top:3px">day</div>
<div class="abs" style="left:697px;top:0;width:138px;height:17px;border-right:1px solid #4f4f4f;text-align:center;padding-top:3px">year</div>
<div class="abs" style="left:835px;top:0;width:138px;height:17px;border-right:1px solid #4f4f4f;text-align:center;padding-top:3px">age</div>
<div class="abs" style="left:973px;top:0;width:171px;height:17px;border-right:1px solid #4f4f4f;text-align:center;padding-top:3px">male</div>
<div class="abs" style="left:0;top:17px;width:54px;height:17px;background:#f0f0f0;border-bottom:1px solid #4f4f4f;border-right:1px solid #4f4f4f;text-align:center;padding-top:3px">1</div>
<div class="abs" style="left:54px;top:33px;width:1089px;height:1px;background:#ececec"></div>
<div class="abs" style="left:53px;top:20px;width:136px;text-align:right">123</div>
<div class="abs" style="left:195px;top:20px">443.13</div>
<div class="abs" style="left:282px;top:20px;width:136px;text-align:right">455.5</div>
<div class="abs" style="left:420px;top:20px;width:136px;text-align:right">1</div>
<div class="abs" style="left:558px;top:20px;width:136px;text-align:right">3</div>
<div class="abs" style="left:696px;top:20px;width:136px;text-align:right">2023</div>
<div class="abs" style="left:834px;top:20px;width:136px;text-align:right">55</div>
<div class="abs" style="left:972px;top:20px;width:169px;text-align:right">1</div>
<div class="abs" style="left:0;top:34px;width:54px;height:17px;background:#f0f0f0;border-bottom:1px solid #4f4f4f;border-right:1px solid #4f4f4f;text-align:center;padding-top:3px">2</div>
<div class="abs" style="left:54px;top:50px;width:1089px;height:1px;background:#ececec"></div>
<div class="abs" style="left:53px;top:37px;width:136px;text-align:right">125</div>
<div class="abs" style="left:195px;top:37px">443.13</div>
<div class="abs" style="left:282px;top:37px;width:136px;text-align:right">455.5</div>
<div class="abs" style="left:420px;top:37px;width:136px;text-align:right">1</div>
<div class="abs" style="left:558px;top:37px;width:136px;text-align:right">3</div>
<div class="abs" style="left:696px;top:37px;width:136px;text-align:right">2023</div>
<div class="abs" style="left:834px;top:37px;width:136px;text-align:right">55</div>
<div class="abs" style="left:972px;top:37px;width:169px;text-align:right">1</div>
<div class="abs" style="left:0;top:51px;width:54px;height:17px;background:#f0f0f0;border-bottom:1px solid #4f4f4f;border-right:1px solid #4f4f4f;text-align:center;padding-top:3px">3</div>
<div class="abs" style="left:54px;top:67px;width:1089px;height:1px;background:#ececec"></div>
<div class="abs" style="left:53px;top:54px;width:136px;text-align:right">130</div>
<div class="abs" style="left:195px;top:54px">100.14</div>
<div class="abs" style="left:282px;top:54px;width:136px;text-align:right">43.55</div>
<div class="abs" style="left:420px;top:54px;width:136px;text-align:right">2</div>
<div class="abs" style="left:558px;top:54px;width:136px;text-align:right">5</div>
<div class="abs" style="left:696px;top:54px;width:136px;text-align:right">2023</div>
<div class="abs" style="left:834px;top:54px;width:136px;text-align:right">34</div>
<div class="abs" style="left:972px;top:54px;width:169px;text-align:right">0</div>
<div class="abs" style="left:0;top:68px;width:54px;height:17px;background:#f0f0f0;border-bottom:1px solid #4f4f4f;border-right:1px solid #4f4f4f;text-align:center;padding-top:3px">4</div>
<div class="abs" style="left:54px;top:84px;width:1089px;height:1px;background:#ececec"></div>
<div class="abs" style="left:53px;top:71px;width:136px;text-align:right">133</div>
<div class="abs" style="left:195px;top:71px">100.14</div>
<div class="abs" style="left:282px;top:71px;width:136px;text-align:right">43.55</div>
<div class="abs" style="left:420px;top:71px;width:136px;text-align:right">2</div>
<div class="abs" style="left:558px;top:71px;width:136px;text-align:right">5</div>
<div class="abs" style="left:696px;top:71px;width:136px;text-align:right">2023</div>
<div class="abs" style="left:834px;top:71px;width:136px;text-align:right">34</div>
<div class="abs" style="left:972px;top:71px;width:169px;text-align:right">0</div>
<div class="abs" style="left:0;top:85px;width:54px;height:17px;background:#f0f0f0;border-bottom:1px solid #4f4f4f;border-right:1px solid #4f4f4f;text-align:center;padding-top:3px">5</div>
<div class="abs" style="left:54px;top:101px;width:1089px;height:1px;background:#ececec"></div>
<div class="abs" style="left:53px;top:88px;width:136px;text-align:right">137</div>
<div class="abs" style="left:195px;top:88px">553.34</div>
<div class="abs" style="left:282px;top:88px;width:136px;text-align:right">134.6</div>
<div class="abs" style="left:420px;top:88px;width:136px;text-align:right">3</div>
<div class="abs" style="left:558px;top:88px;width:136px;text-align:right">2</div>
<div class="abs" style="left:696px;top:88px;width:136px;text-align:right">2023</div>
<div class="abs" style="left:834px;top:88px;width:136px;text-align:right">32</div>
<div class="abs" style="left:972px;top:88px;width:169px;text-align:right">0</div>
<div class="abs" style="left:0;top:102px;width:54px;height:17px;background:#f0f0f0;border-bottom:1px solid #4f4f4f;border-right:1px solid #4f4f4f;text-align:center;padding-top:3px">6</div>
<div class="abs" style="left:54px;top:118px;width:1089px;height:1px;background:#ececec"></div>
<div class="abs" style="left:53px;top:105px;width:136px;text-align:right">138</div>
<div class="abs" style="left:195px;top:105px">553.34</div>
<div class="abs" style="left:282px;top:105px;width:136px;text-align:right">134.6</div>
<div class="abs" style="left:420px;top:105px;width:136px;text-align:right">3</div>
<div class="abs" style="left:558px;top:105px;width:136px;text-align:right">2</div>
<div class="abs" style="left:696px;top:105px;width:136px;text-align:right">2023</div>
<div class="abs" style="left:834px;top:105px;width:136px;text-align:right">32</div>
<div class="abs" style="left:972px;top:105px;width:169px;text-align:right">0</div>
<div class="abs" style="left:0;top:119px;width:54px;height:17px;background:#f0f0f0;border-bottom:1px solid #4f4f4f;border-right:1px solid #4f4f4f;text-align:center;padding-top:3px">7</div>
<div class="abs" style="left:54px;top:135px;width:1089px;height:1px;background:#ececec"></div>
<div class="abs" style="left:53px;top:122px;width:136px;text-align:right">143</div>
<div class="abs" style="left:195px;top:122px">431.33</div>
<div class="abs" style="left:282px;top:122px;width:136px;text-align:right">303.3</div>
<div class="abs" style="left:420px;top:122px;width:136px;text-align:right">1</div>
<div class="abs" style="left:558px;top:122px;width:136px;text-align:right">6</div>
<div class="abs" style="left:696px;top:122px;width:136px;text-align:right">2023</div>
<div class="abs" style="left:834px;top:122px;width:136px;text-align:right">53</div>
<div class="abs" style="left:972px;top:122px;width:169px;text-align:right">1</div>
<div class="abs" style="left:0;top:136px;width:54px;height:17px;background:#f0f0f0;border-bottom:1px solid #4f4f4f;border-right:1px solid #4f4f4f;text-align:center;padding-top:3px">8</div>
<div class="abs" style="left:54px;top:152px;width:1089px;height:1px;background:#ececec"></div>
<div class="abs" style="left:53px;top:139px;width:136px;text-align:right">145</div>
<div class="abs" style="left:195px;top:139px">431.33</div>
<div class="abs" style="left:282px;top:139px;width:136px;text-align:right">303.3</div>
<div class="abs" style="left:420px;top:139px;width:136px;text-align:right">1</div>
<div class="abs" style="left:558px;top:139px;width:136px;text-align:right">6</div>
<div class="abs" style="left:696px;top:139px;width:136px;text-align:right">2023</div>
<div class="abs" style="left:834px;top:139px;width:136px;text-align:right">53</div>
<div class="abs" style="left:972px;top:139px;width:169px;text-align:right">1</div>
<div class="abs" style="left:191px;top:17px;width:1px;height:136px;background:#ececec"></div>
<div class="abs" style="left:282px;top:17px;width:1px;height:136px;background:#ececec"></div>
<div class="abs" style="left:420px;top:17px;width:1px;height:136px;background:#ececec"></div>
<div class="abs" style="left:558px;top:17px;width:1px;height:136px;background:#ececec"></div>
<div class="abs" style="left:696px;top:17px;width:1px;height:136px;background:#ececec"></div>
<div class="abs" style="left:834px;top:17px;width:1px;height:136px;background:#ececec"></div>
<div class="abs" style="left:972px;top:17px;width:1px;height:136px;background:#ececec"></div>
<div class="abs" style="left:1143px;top:17px;width:1px;height:136px;background:#ececec"></div>
</div>
<div class="abs" style="left:1544px;top:151px;width:16px;height:352px;background:#f0f0f0"></div>
<div class="abs" style="left:1545px;top:168px;width:15px;height:279px;background:#cdcdcd"></div>
<svg class="abs" style="left:1547px;top:156px" width="10" height="7" viewBox="0 0 10 7"><path d="M1.200 5.800L5 2L8.800 5.800" fill="none" stroke="#484848" stroke-width="1.900"/></svg>
<svg class="abs" style="left:1547px;top:490px" width="10" height="7" viewBox="0 0 10 7"><path d="M1.200 1.200L5 5L8.800 1.200" fill="none" stroke="#3c3c3c" stroke-width="1.900"/></svg>
<div class="abs" style="left:401px;top:503px;width:1143px;height:15px;background:#f0f0f0"></div>
<svg class="abs" style="left:405px;top:505px" width="7" height="10" viewBox="0 0 7 10"><path d="M5.500 1.200L1.800 5L5.500 8.800" fill="none" stroke="#b4b4b4" stroke-width="1.400"/></svg>
<svg class="abs" style="left:1533px;top:505px" width="7" height="10" viewBox="0 0 7 10"><path d="M1.500 1.200L5.200 5L1.500 8.800" fill="none" stroke="#b4b4b4" stroke-width="1.400"/></svg>


<div class="ann" style="left:71px;top:339.6px;transform:scaleX(1.0510)">It worked !</div>
<div class="ann" style="left:71px;top:375.70000000000005px;transform:scaleX(0.9933)">A new SAS dataset</div>
<div class="ann" style="left:71px;top:411.8px;transform:scaleX(1.0095)">has been created with</div>
<div class="ann" style="left:71px;top:447.90000000000003px;transform:scaleX(1.0014)">all of the observations</div>
<div class="ann" style="left:71px;top:484.0px;transform:scaleX(1.0211)">of the other 2 datasets.</div>
<div class="ann" style="left:546px;top:337.0px;transform:scaleX(1.0195)">Notice how the variable</div>
<div class="ann" style="left:546px;top:372.55px;transform:scaleX(1.0066)">ID is sorted from lowest</div>
<div class="ann" style="left:546px;top:408.1px;transform:scaleX(0.9978)">to highest.</div>
<svg class="abs" style="left:0;top:0;pointer-events:none" width="1640" height="970" viewBox="0 0 1640 970" fill="none" stroke="#e6202a" stroke-linecap="round" stroke-linejoin="round">
<path d="M235.500 349L150 185.500" stroke-width="4.600"/><path d="M155.500 217L150 185.500L175.500 206" stroke-width="4.800"/>
<path d="M572.500 337L575 302" stroke-width="4.200"/><path d="M564.500 319.500L575 302L588.500 321.500" stroke-width="4.200"/>
</svg>



<!-- explorer tabs -->
<div class="abs" style="left:12px;top:913px;width:157px;height:20px;background:#f0f0f0;border-bottom:1px solid #7c7c7c"></div>
<div class="abs" style="left:169px;top:912px;width:164px;height:23px;background:#f0f0f0;border-bottom:1px solid #6e6e6e;border-right:1px solid #6e6e6e;box-shadow:1px 1px 0 #a8b0b8"></div>
<svg class="abs" style="left:17px;top:915px" width="16" height="15" viewBox="0 0 16 15"><rect x="4.500" y="0.500" width="10" height="8" fill="#fff" stroke="#10101a"/><rect x="6" y="2" width="7" height="1.200" fill="#8a8a9a"/><rect x="0.500" y="4.500" width="11" height="9" fill="#fff" stroke="#10101a" stroke-width="1.200"/><rect x="2" y="7" width="2.500" height="5" fill="#1a3ac8"/><rect x="4.500" y="6" width="2.500" height="6" fill="#1a9a3a"/><rect x="7" y="8" width="2.500" height="4" fill="#d02a1a"/></svg>
<div class="t" style="left:37px;top:918px;font-size:11px;line-height:13px;transform:scaleX(.93);transform-origin:0 0">Results</div>
<svg class="abs" style="left:173px;top:916px" width="17" height="17" viewBox="0 0 17 17"><path d="M0.500 3.500L2.500 1H6.500L8 3.500H15.500V14.500H0.500Z" fill="#d9dd62" stroke="#8a8a3a" stroke-width="0.800"/><path d="M0.500 14.500H15.500V4" fill="none" stroke="#4a4a1a" stroke-width="1"/><circle cx="6" cy="7" r="3.300" fill="#7fe0e0" stroke="#102a3a" stroke-width="1.400"/><circle cx="5" cy="6" r="1" fill="#e8ffff"/><path d="M8.500 9.500L13 14" stroke="#5a1a0a" stroke-width="2"/></svg>
<div class="t" style="left:193px;top:919px;font-size:11px;line-height:13px;transform:scaleX(.92);transform-origin:0 0">Explorer</div>
<!-- window bar -->
<div class="abs" style="left:366px;top:909px;width:1269px;height:34px;background:linear-gradient(#ffffff 0,#f6f6f6 3px,#f4f4f4 10px,#f0f0f0 11px,#f0f0f0 27px,#f8f8f8 28px,#fafafa 100%);border-bottom:1px solid #6c6c6c;border-right:1px solid #8a8a8a"></div>
<div class="abs" style="left:362px;top:909px;width:5px;height:34px;background:#f4f4f4"></div>
<div class="abs" style="left:534px;top:918px;width:2px;height:18px;background:#8c8c8c"></div>
<div class="abs" style="left:400px;top:919px;width:150px;height:17px;overflow:hidden"><div class="t" style="left:0;top:6px;font-size:12px;transform:scaleX(1.027);transform-origin:0 0">Output - (Untitled)</div></div>
<div class="abs" style="left:697px;top:918px;width:2px;height:18px;background:#8c8c8c"></div>
<div class="abs" style="left:563px;top:919px;width:150px;height:17px;overflow:hidden"><div class="t" style="left:0;top:6px;font-size:12px;transform:scaleX(1.015);transform-origin:0 0">Log - (Untitled)</div></div>
<div class="abs" style="left:860px;top:918px;width:2px;height:18px;background:#8c8c8c"></div>
<div class="abs" style="left:726px;top:919px;width:150px;height:17px;overflow:hidden"><div class="t" style="left:0;top:6px;font-size:12px;transform:scaleX(0.907);transform-origin:0 0">SAScode1.sas *</div></div>
<div class="abs" style="left:865px;top:919px;width:159px;height:17px;background:#e2e2e2;border-top:1px solid #bdbdbd;border-left:1px solid #9a9a9a"></div>
<div class="abs" style="left:889px;top:919px;width:150px;height:17px;overflow:hidden"><div class="t" style="left:0;top:6px;font-size:12px;font-weight:bold;transform:scaleX(0.943);transform-origin:0 0">VIEWTABLE: Work.Har...</div></div>
<svg class="abs" style="left:380px;top:922px" width="16" height="14" viewBox="0 0 16 14"><path d="M0.500 0.500H10.500L14.500 4.500V14H0.500Z" fill="#fff" stroke="#2a2a2a"/><path d="M10.500 0.500V4.500H14.500" fill="none" stroke="#2a2a2a"/><path d="M3 5H9M3 8H12M3 11H12M7 5V14" stroke="#3a3a3a" stroke-width="1"/></svg>
<svg class="abs" style="left:544px;top:921px" width="16" height="15" viewBox="0 0 16 15"><path d="M1.500 2.500H12.500V15H1.500Z" fill="#fff" stroke="#2a2a2a"/><path d="M3 1V4M6 1V4M9 1V4M12 1V4" stroke="#2a2a2a"/><path d="M4 7H10M4 10H10M4 13H8" stroke="#7a7a7a"/></svg>
<svg class="abs" style="left:706px;top:921px" width="16" height="15" viewBox="0 0 16 15"><path d="M2.500 1.500H13.500V15H2.500Z" fill="#fff" stroke="#1a1a1a" stroke-width="1.200"/><path d="M8 1V6M5.500 3.500H10.500" stroke="#0a2ad0" stroke-width="1.600"/><path d="M1 13L6 7L9.500 10M4 8L8.500 14.500" stroke="#050505" stroke-width="1.800" fill="none"/></svg>
<svg class="abs" style="left:869px;top:921px" width="17" height="15" viewBox="0 0 17 15"><rect x="0.500" y="1.500" width="12" height="10" fill="#fff" stroke="#10103a"/><rect x="0" y="1" width="13" height="3" fill="#0c0c6a"/><rect x="2" y="6" width="3" height="4" fill="#2a2ab0"/><rect x="6" y="5.500" width="2" height="3" fill="#b01818"/><rect x="13" y="0" width="1" height="9" fill="#10103a"/><rect x="8" y="8" width="4" height="4" fill="#5a1a9a"/><rect x="12" y="8" width="4" height="4" fill="#a01818"/><rect x="8" y="12" width="4" height="3" fill="#6a1a8a"/><rect x="12" y="12" width="4" height="3" fill="#1e8a2e"/></svg>
<!-- status bar -->
<div class="abs" style="left:1px;top:944px;width:1634px;height:23px;background:#f0f0f0"></div>
<div class="abs" style="left:1px;top:943px;width:362px;height:1px;background:#6c6c6c"></div>
<svg class="abs" style="left:3px;top:951px" width="17" height="10" viewBox="0 0 17 10"><path d="M2 0.500H15.500L14.500 2V8.500H1V2Z" fill="#d8d8d8" stroke="#4a4a4a"/><path d="M2 3.500H13" stroke="#fff" stroke-width="1.400"/><path d="M2 6.500H13.500" stroke="#8a8a8a"/><path d="M15.500 0.500V7L14.500 8.500" stroke="#2a2a2a" fill="none" stroke-width="1.200"/></svg>
<div class="t" style="left:22px;top:950px;font-size:12px;transform:scaleX(.965);transform-origin:0 0">C:\Users\tve5</div>
<div class="abs" style="left:1520px;top:946px;width:1px;height:19px;background:#d0d0d0"></div>
<svg class="abs" style="left:1623px;top:955px" width="11" height="11" viewBox="0 0 11 11" fill="#b8b8b8"><rect x="7" y="1" width="2" height="2"/><rect x="4" y="4" width="2" height="2"/><rect x="7" y="4" width="2" height="2"/><rect x="1" y="7" width="2" height="2"/><rect x="4" y="7" width="2" height="2"/><rect x="7" y="7" width="2" height="2"/></svg>


<!-- ===== outer frame ===== -->
<div id="bTop" class="abs"></div>
<div id="bLeft" class="abs"></div>
<div id="bLeft2" class="abs"></div>
<div id="bRightEdge" class="abs"></div>
<div id="bRight" class="abs"></div>
<div id="bBottom" class="abs"></div>
</body>
</html>
